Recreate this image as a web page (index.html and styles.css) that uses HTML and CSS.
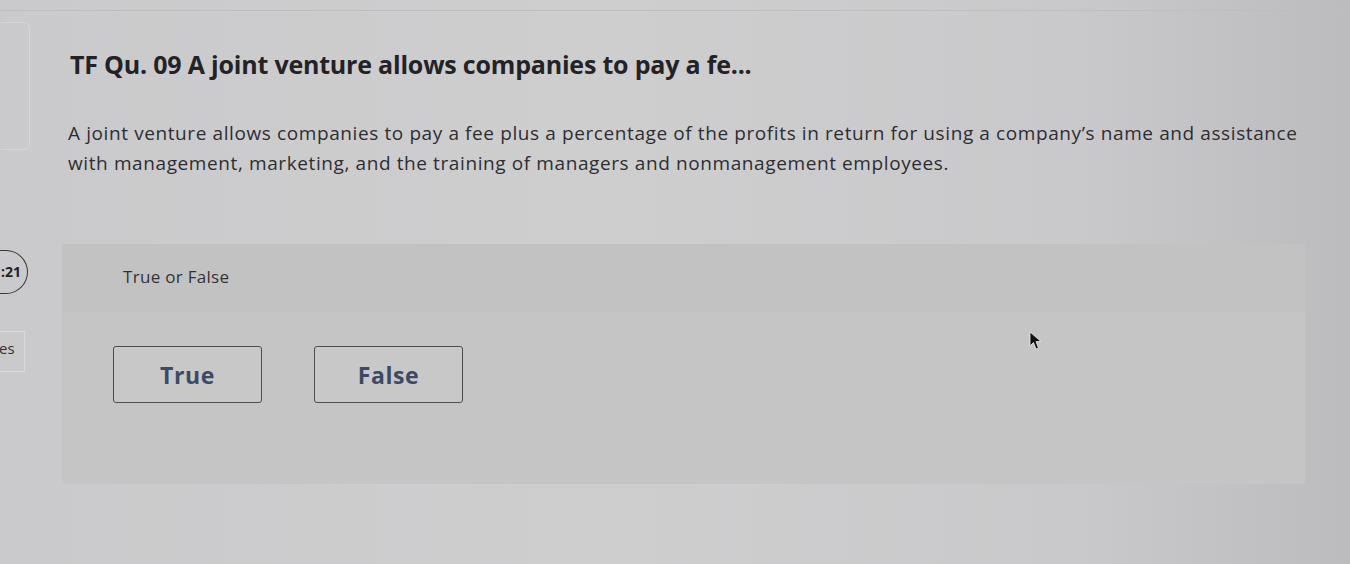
FILE: index.html
```html
<!DOCTYPE html>
<html>
<head>
<meta charset="utf-8">
<link rel="stylesheet" href="styles.css">
<title>TF Qu. 09</title>
</head>
<body>
    <div class="page">
        <div class="rail">
            <div class="rail-box"></div>
            <div class="timer">:21</div>
            <div class="rail-tab">es</div>
        </div>

        <div class="main">
            <h1 class="title">TF Qu. 09 A joint venture allows companies to pay a fe...</h1>
            <p class="prompt">A joint venture allows companies to pay a fee plus a percentage of the profits in return for using a company’s name and assistance with management, marketing, and the training of managers and nonmanagement employees.</p>

            <div class="panel">
                <div class="panel-head">True or False</div>
                <div class="choices">
                    <button class="choice">True</button>
                    <button class="choice">False</button>
                </div>
            </div>
        </div>
    </div>

    <!-- mouse pointer -->
    <svg class="pointer" width="14" height="20" viewBox="0 0 14 20">
        <path d="M1 1 L1 15 L4.5 11.5 L7 18 L9.5 17 L7 10.5 L12 10.5 Z" fill="#111" stroke="#eee" stroke-width="0.8"/>
    </svg>
</body>
</html>
```

FILE: styles.css
```css
body {
    margin: 0;
    font-family: "Open Sans", Lato, sans-serif;
    background: linear-gradient(to right, #cacacc 0%, #cececf 45%, #c9c9cb 80%, #bcbcbf 100%);
    color: #2b2b2f;
    height: 564px;
    overflow: hidden;
    position: relative;
}

.page {
    display: flex;
    border-top: 1px solid #bdbdc0;
    margin-top: 10px;
}

/* left rail, mostly cut off */
.rail {
    width: 30px;
    display: flex;
    flex-direction: column;
    align-items: flex-end;
}

.rail-box {
    width: 28px;
    height: 126px;
    margin-top: 11px;
    border: 1px solid #d6d6d8;
    border-left: none;
    border-radius: 0 6px 6px 0;
}

.timer {
    margin-top: 100px;
    width: 48px;
    height: 42px;
    margin-right: 2px;
    border: 1.5px solid #3a3a3a;
    border-left: none;
    border-radius: 0 22px 22px 0;
    font-weight: 700;
    font-size: 14px;
    line-height: 42px;
    text-align: right;
    padding-right: 6px;
    box-sizing: content-box;
    color: #222;
}

.rail-tab {
    margin-top: 37px;
    width: 25px;
    height: 39px;
    margin-right: 5px;
    border: 1px solid #dadadc;
    border-left: none;
    font-size: 15px;
    line-height: 32px;
    color: #333;
}

.main {
    flex: 1;
    padding: 0 45px 0 32px;
}

.title {
    margin: 37px 0 0 8px;
    font-size: 25px;
    line-height: 32px;
    font-weight: 700;
    letter-spacing: -0.2px;
    color: #232327;
}

.prompt {
    margin: 38px 0 0 6px;
    font-size: 19px;
    line-height: 30px;
    letter-spacing: 0.6px;
    color: #2e2e32;
}

.panel {
    margin-top: 66px;
    background: #c5c5c6;
    border-radius: 2px;
}

.panel-head {
    background: #c2c2c3;
    padding: 21px 0 23px 61px;
    font-size: 17px;
    line-height: 24px;
    letter-spacing: 0.3px;
    color: #333336;
}

.choices {
    display: flex;
    gap: 52px;
    padding: 34px 0 81px 51px;
}

.choice {
    width: 149px;
    height: 57px;
    background: #c8c8c9;
    border: 1px solid #4d4d4f;
    border-radius: 3px;
    font-family: "Open Sans", Lato, sans-serif;
    font-size: 23px;
    font-weight: 700;
    letter-spacing: 0.6px;
    color: #3c4a65;
    cursor: pointer;
}

.pointer {
    position: absolute;
    left: 1029px;
    top: 331px;
}
```
